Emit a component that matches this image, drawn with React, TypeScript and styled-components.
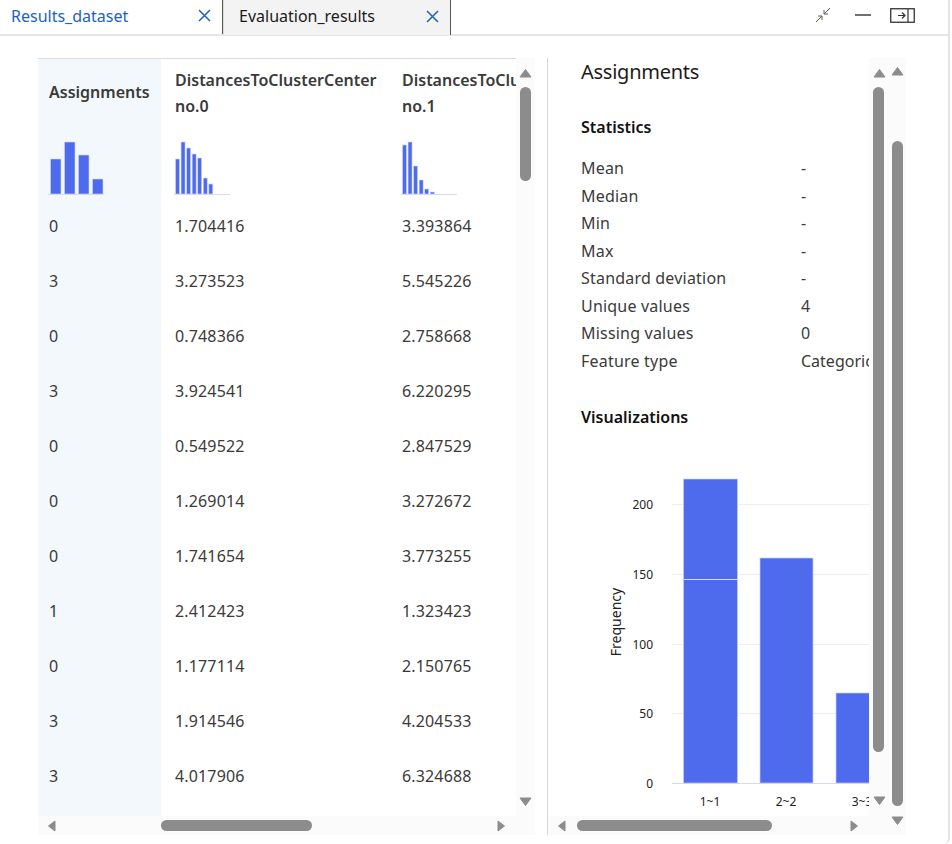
import React from "react";
import styled, { createGlobalStyle } from "styled-components";

const Global = createGlobalStyle`
  html, body { margin: 0; padding: 0; background: #fff; overflow: hidden; }
  body { font-family: "Noto Sans", "Open Sans", "Liberation Sans", sans-serif; color: #323130; }
`;

const Shell = styled.div`
  width: 950px; height: 844px; box-sizing: border-box; overflow: hidden;
  border-right: 2px solid #e4e4e4; border-bottom-right-radius: 6px;
  display: flex; flex-direction: column;
`;
const TabBar = styled.div`
  height: 36px; flex: none; box-sizing: border-box; display: flex; align-items: stretch;
  border-bottom: 2px solid #e6e6e6;
`;
const Tab = styled.div<{ $active?: boolean; $w: number }>`
  width: ${p => p.$w}px; box-sizing: border-box; display: flex; align-items: center; justify-content: space-between;
  padding: 0 11px 3px ${p => (p.$active ? 11 : 15)}px; font-size: 16px; letter-spacing: 0;
  color: ${p => (p.$active ? "#1a62c5" : "#1b1b1b")};
  background: ${p => (p.$active ? "#fff" : "#f3f3f3")};
  border-right: 1px solid #555;
  margin-bottom: ${p => (p.$active ? "0" : "-1px")};
`;
const TabGap = styled.div`
  width: 1px; background: #ddd;
`;
const Actions = styled.div`
  margin-left: auto; display: flex; align-items: center; padding: 0 33px 4px 0;
`;
const ActionIcon = styled.svg<{ $ml: number }>`
  margin-left: ${p => p.$ml}px; display: block;
`;
const Body = styled.div`
  flex: 1; display: flex; align-items: stretch; padding: 22px 0 9px 38px; min-height: 0;
`;
const LeftPane = styled.div`
  width: 497px; flex: none; display: flex; flex-direction: column; min-height: 0;
`;
const Divider = styled.div`
  width: 1px; flex: none; background: #d6d6d6; margin: 0 0 0 12px;
`;
const RightPane = styled.div`
  width: 358px; flex: none; display: flex; min-height: 0;
`;
const RightMain = styled.div`
  width: 341px; flex: none; display: flex; flex-direction: column; min-height: 0;
`;
const Upper = styled.div`
  flex: 1; display: flex; min-height: 0;
`;
const Viewport = styled.div`
  flex: 1; min-width: 0; overflow: hidden; display: flex;
  border-top: 1px solid #dcdcdc;
`;
const Col = styled.div<{ $w: number; $key?: boolean }>`
  width: ${p => p.$w}px; flex: none; box-sizing: border-box;
  background: ${p => (p.$key ? "#f3f8fc" : "#fff")};
  padding-left: ${p => (p.$key ? 11 : 14)}px;
`;
const Head = styled.div<{ $key?: boolean }>`
  height: 139px; box-sizing: border-box; display: flex; flex-direction: column;
  padding-top: ${p => (p.$key ? 20 : 8)}px;
`;
const HeadText = styled.div<{ $key?: boolean }>`
  font-size: 16px; font-weight: 600; line-height: 26px; white-space: nowrap; letter-spacing: 0; color: #3a3a3a;
  height: ${p => (p.$key ? 26 : 52)}px;
`;
const Mini = styled.svg`
  display: block; margin-top: auto; margin-left: -1px; margin-bottom: 3px;
`;
const Cell = styled.div`
  height: 55px; display: flex; align-items: center; font-size: 16px; letter-spacing: 0.15px; color: #3b3a39;
`;
const VBar = styled.div<{ $w: number }>`
  width: ${p => p.$w}px; flex: none; background: #fbfbfb; position: relative;
`;
const VThumb = styled.div<{ $top: number; $h: number; $left: number }>`
  position: absolute; top: ${p => p.$top}px; left: ${p => p.$left}px; width: 11px; height: ${p => p.$h}px;
  background: #8c8c8c; border-radius: 6px;
`;
const HBar = styled.div`
  height: 19px; flex: none; background: #fbfbfb; position: relative;
`;
const HThumb = styled.div<{ $left: number; $w: number }>`
  position: absolute; top: 4px; left: ${p => p.$left}px; width: ${p => p.$w}px; height: 11px;
  background: #8c8c8c; border-radius: 6px;
`;
const Arrow = styled.svg<{ $x: number; $y: number }>`
  position: absolute; left: ${p => p.$x}px; top: ${p => p.$y}px; display: block;
`;
const Details = styled.div`
  flex: 1; min-width: 0; overflow: hidden; box-sizing: border-box; padding-left: 33px;
`;
const Title = styled.div`
  font-size: 20px; line-height: 28px; color: #1b1a19; letter-spacing: -0.25px; white-space: nowrap;
`;
const Section = styled.div<{ $mt: number }>`
  font-size: 16px; font-weight: 600; line-height: 24px; color: #111; letter-spacing: 0; margin-top: ${p => p.$mt}px;
`;
const Stats = styled.div`
  margin-top: 16px; display: grid; grid-template-columns: 220px 100px; grid-auto-rows: 27.5px;
`;
const StatLabel = styled.div`
  font-size: 16px; line-height: 27.5px; letter-spacing: 0.2px; color: #3b3a39; white-space: nowrap;
`;
const StatValue = styled(StatLabel)`
  letter-spacing: 0;
`;
const Chart = styled.svg`
  display: block; margin: 16px 0 0 -33px;
`;

const up = "M1 9 L6.5 1.5 L12 9 Z";
const down = "M1 1 L12 1 L6.5 8.5 Z";
const left = "M8 1 L8 11 L1.5 6 Z";
const right = "M1 1 L7.5 6 L1 11 Z";

const ArrowV = ({ x, y, d }: { x: number; y: number; d: string }) => (
  <Arrow $x={x} $y={y} width="13" height="10" viewBox="0 0 13 10">
    <path d={d} fill="#8c8c8c" stroke="#8c8c8c" strokeWidth="1" strokeLinejoin="round" />
  </Arrow>
);
const ArrowH = ({ x, y, d }: { x: number; y: number; d: string }) => (
  <Arrow $x={x} $y={y} width="9" height="12" viewBox="0 0 9 12">
    <path d={d} fill="#8c8c8c" stroke="#8c8c8c" strokeWidth="1" strokeLinejoin="round" />
  </Arrow>
);

const CloseIcon = () => (
  <svg width="13" height="13" viewBox="0 0 13 13"><path d="M1 1 L12 12 M12 1 L1 12" stroke="#1a62c5" strokeWidth="1.5" fill="none" /></svg>
);

const Histogram = ({ tops, bw, step, start }: { tops: number[]; bw: number; step: number; start: number }) => (
  <Mini width="56" height="54" viewBox="0 0 56 54">
    {tops.map((t, i) => (
      <rect key={i} x={start + i * step} y={t - 141} width={bw} height={194 - t} fill="#4f6bed" stroke="#cfd6f8" strokeWidth="0.6" />
    ))}
    <line x1="0" x2="56" y1="53.5" y2="53.5" stroke="#d5daf5" />
  </Mini>
);

const assign = ["0", "3", "0", "3", "0", "0", "0", "1", "0", "3", "3"];
const d0 = ["1.704416", "3.273523", "0.748366", "3.924541", "0.549522", "1.269014", "1.741654", "2.412423", "1.177114", "1.914546", "4.017906"];
const d1 = ["3.393864", "5.545226", "2.758668", "6.220295", "2.847529", "3.272672", "3.773255", "1.323423", "2.150765", "4.204533", "6.324688"];
const stats: [string, string][] = [
  ["Mean", "-"], ["Median", "-"], ["Min", "-"], ["Max", "-"], ["Standard deviation", "-"],
  ["Unique values", "4"], ["Missing values", "0"], ["Feature type", "Categorical"],
];

const bars = [
  { x: 135.5, w: 54, top: 479 },
  { x: 212, w: 53, top: 558 },
  { x: 288, w: 54, top: 693 },
];
const ticks = [[200, 504.5], [150, 574.5], [100, 644.5], [50, 713.5], [0, 783.5]] as const;
const OX = 548, OY = 445;

const FrequencyChart = () => (
  <Chart width="321" height="366" viewBox="0 0 321 366">
    {ticks.map(([v, y]) => (
      <g key={v}>
        <line x1={672 - OX} x2={321} y1={y - OY} y2={y - OY} stroke={v === 0 ? "#d4d9ee" : "#eeeeee"} strokeWidth="1.2" />
        <text x={653 - OX} y={y - OY + 4} textAnchor="end" fontSize="12" fill="#222">{v}</text>
      </g>
    ))}
    <text transform={`translate(${621 - OX} ${622 - OY}) rotate(-90)`} textAnchor="middle" fontSize="14" fill="#222">Frequency</text>
    {bars.map(b => (
      <rect key={b.x} x={b.x} y={b.top - OY} width={b.w} height={783 - b.top} fill="#4f6bed" stroke="#c5cefa" strokeWidth="0.7" />
    ))}
    <line x1={135.5} x2={189.5} y1={579.5 - OY} y2={579.5 - OY} stroke="#d8defc" strokeWidth="1.2" />
    {[["1~1", 162], ["2~2", 238], ["3~3", 314]].map(([t, x]) => (
      <text key={t} x={x} y={806 - OY} textAnchor="middle" fontSize="12" fill="#222">{t}</text>
    ))}
  </Chart>
);

export default function App() {
  return (
    <>
      <Global />
      <Shell>
        <TabBar>
          <Tab $active $w={223}>Results_dataset<CloseIcon /></Tab>
          <TabGap />
          <Tab $w={227}>Evaluation_results<CloseIcon /></Tab>
          <Actions>
            <ActionIcon $ml={0} width="16" height="16" viewBox="0 0 16 16">
              <path d="M1 15 L7 9 M3 9 H7 V13" stroke="#7a5a4a" fill="none" strokeWidth="1" />
              <path d="M15 1 L9 7 M9 3 V7 H13" stroke="#5a5a6a" fill="none" strokeWidth="1" />
            </ActionIcon>
            <ActionIcon $ml={24} width="16" height="4" viewBox="0 0 16 4">
              <path d="M0 2 H16" stroke="#333" strokeWidth="1.4" />
            </ActionIcon>
            <ActionIcon $ml={19} width="25" height="15" viewBox="0 0 25 15">
              <rect x="0.75" y="0.75" width="23.5" height="13.5" fill="none" stroke="#333" strokeWidth="1.3" />
              <path d="M18 1 V14" stroke="#333" strokeWidth="1.2" />
              <path d="M8 7.5 H15 M12 4.5 L15 7.5 L12 10.5" stroke="#333" fill="none" strokeWidth="1.2" />
            </ActionIcon>
          </Actions>
        </TabBar>
        <Body>
          <LeftPane>
            <Upper>
              <Viewport>
                <Col $w={123} $key>
                  <Head $key>
                    <HeadText $key>Assignments</HeadText>
                    <Histogram tops={[159, 142, 155, 179]} bw={10.5} step={14} start={2.5} />
                  </Head>
                  {assign.map((v, i) => <Cell key={i}>{v}</Cell>)}
                </Col>
                <Col $w={227}>
                  <Head>
                    <HeadText>DistancesToClusterCenter<br />no.0</HeadText>
                    <Histogram tops={[159, 142, 148, 154, 158, 178, 184]} bw={4} step={5.55} start={1.5} />
                  </Head>
                  {d0.map((v, i) => <Cell key={i}>{v}</Cell>)}
                </Col>
                <Col $w={227}>
                  <Head>
                    <HeadText>DistancesToClusterCenter<br />no.1</HeadText>
                    <Histogram tops={[145, 142, 166, 180, 189, 192]} bw={4} step={5.55} start={1.5} />
                  </Head>
                  {d1.map((v, i) => <Cell key={i}>{v}</Cell>)}
                </Col>
              </Viewport>
              <VBar $w={19}>
                <ArrowV x={3} y={10} d={up} />
                <VThumb $left={4} $top={29} $h={94} />
                <ArrowV x={3} y={739} d={down} />
              </VBar>
            </Upper>
            <HBar>
              <ArrowH x={9} y={4} d={left} />
              <HThumb $left={123} $w={151} />
              <ArrowH x={459} y={4} d={right} />
            </HBar>
          </LeftPane>
          <Divider />
          <RightPane>
            <RightMain>
              <Upper>
                <Details>
                  <Title>Assignments</Title>
                  <Section $mt={29}>Statistics</Section>
                  <Stats>
                    {stats.map(([k, v]) => (
                      <React.Fragment key={k}>
                        <StatLabel>{k}</StatLabel>
                        <StatValue>{v}</StatValue>
                      </React.Fragment>
                    ))}
                  </Stats>
                  <Section $mt={30}>Visualizations</Section>
                  <FrequencyChart />
                </Details>
                <VBar $w={20}>
                  <ArrowV x={4} y={10} d={up} />
                  <VThumb $left={4} $top={29} $h={665} />
                  <ArrowV x={4} y={738} d={down} />
                </VBar>
              </Upper>
              <HBar>
                <ArrowH x={9} y={4} d={left} />
                <HThumb $left={29} $w={195} />
                <ArrowH x={302} y={4} d={right} />
              </HBar>
            </RightMain>
            <VBar $w={17}>
              <ArrowV x={2} y={8} d={up} />
              <VThumb $left={3} $top={83} $h={665} />
              <ArrowV x={2} y={758} d={down} />
            </VBar>
          </RightPane>
        </Body>
      </Shell>
    </>
  );
}
